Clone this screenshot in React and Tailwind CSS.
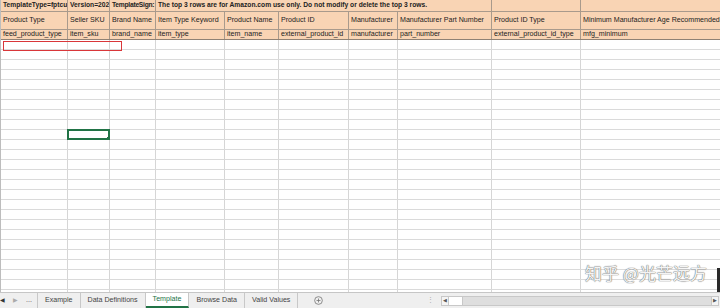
import React from "react";

const COLW = ["w-[67px]", "w-[42px]", "w-[46px]", "w-[69px]", "w-[54px]", "w-[70px]", "w-[49px]", "w-[94px]", "w-[89px]", "w-[140px]"];
const HEAD = ["Product Type", "Seller SKU", "Brand Name", "Item Type Keyword", "Product Name", "Product ID", "Manufacturer", "Manufacturer Part Number", "Product ID Type", "Minimum Manufacturer Age Recommended"];
const KEYS = ["feed_product_type", "item_sku", "brand_name", "item_type", "item_name", "external_product_id", "manufacturer", "part_number", "external_product_id_type", "mfg_minimum"];
const ROWS = 26;
const SELECTED_ROW = 9;

function PeachCell({ w, children, bold, tight }) {
  return (
    <div className={`${w} shrink-0 h-full flex items-center border-r border-[#a99a8c] overflow-hidden whitespace-nowrap pl-[2px] ${bold ? "font-bold" : ""} ${tight ? "tracking-[-0.25px]" : ""}`}>
      {children}
    </div>
  );
}

function Tab({ label, active }) {
  return (
    <div className={`h-full flex items-center px-[7px] border-r border-[#c8c8c8] ${active ? "bg-white text-[#217346] border-b-2 border-b-[#217346]" : "text-[#444]"}`}>
      {label}
    </div>
  );
}

export default function App() {
  return (
    <div className="w-[720px] h-[308px] relative overflow-hidden bg-white flex flex-col font-['Liberation_Sans',Arial,sans-serif] text-[#222]">
      {/* column header selection marker */}
      <div className="absolute top-0 left-[67px] w-[42px] h-[1px] bg-[#6fa487]" />

      <div className="flex-1 relative overflow-hidden border-l border-[#bdbdbd]">
        {/* row 1: cells clip their text, the long one runs over empty cells */}
        <div className="flex h-[12px] bg-[#f9d4b4] border-b border-[#a99a8c] text-[6.7px]">
          <PeachCell w={COLW[0]} bold>TemplateType=fptcu</PeachCell>
          <PeachCell w={COLW[1]} bold>Version=202</PeachCell>
          <PeachCell w={COLW[2]} bold tight>TemplateSign:</PeachCell>
          <div className="w-[336px] shrink-0 h-full flex items-center border-r border-[#a99a8c] whitespace-nowrap pl-[2px] font-bold">
            The top 3 rows are for Amazon.com use only. Do not modify or delete the top 3 rows.
          </div>
          <PeachCell w={COLW[8]} />
          <PeachCell w={COLW[9]} />
        </div>
        {/* row 2 */}
        <div className="flex h-[18px] bg-[#f9d4b4] border-b border-[#a99a8c] text-[7.1px]">
          {HEAD.map((h, i) => (
            <PeachCell key={h} w={COLW[i]}>{h}</PeachCell>
          ))}
        </div>
        {/* row 3 */}
        <div className="flex h-[10px] bg-[#f9d4b4] border-b border-[#8f8174] text-[7.1px]">
          {KEYS.map((k, i) => (
            <PeachCell key={k} w={COLW[i]}>{k}</PeachCell>
          ))}
        </div>
        {/* empty rows */}
        {Array.from({ length: ROWS }, (_, r) => (
          <div key={r} className="flex h-[10px] border-b border-[#dadada]">
            {COLW.map((w, c) => (
              <div key={c} className={`${w} shrink-0 h-full border-r border-[#d6d6d6] relative`}>
                {r === SELECTED_ROW && c === 1 && (
                  <div className="absolute -left-[1px] -top-[1px] w-[43px] h-[11px] border-2 border-[#217346]">
                    <div className="absolute -right-[2px] -bottom-[2px] w-[3px] h-[3px] bg-[#217346]" />
                  </div>
                )}
                {r === SELECTED_ROW && c === 0 && (
                  <div className="absolute -left-[1px] top-0 w-[1px] h-[10px] bg-[#217346]" />
                )}
              </div>
            ))}
          </div>
        ))}

        {/* red annotation box */}
        <div className="absolute left-[2px] top-[41px] w-[119px] h-[10px] border border-[#d9373a]" />

        {/* watermark */}
        <div className="absolute left-[584px] top-[264px] text-[17px] leading-none text-[#f4f4f4] font-['Noto_Sans_CJK_SC',sans-serif] [text-shadow:0_0_1px_#666,0_0_1px_#666]">
          知乎 @光芒远方
        </div>
        <div className="absolute right-0 top-[268px] w-[3px] h-[24px] bg-[#2a2a2a]" />
      </div>

      {/* sheet tabs */}
      <div className="h-[16px] shrink-0 flex items-center bg-[#efefef] border-t border-[#c6c6c6] text-[7.1px] text-[#444]">
        <div className="h-full flex items-center gap-[8px] pl-0 pr-[5px] border-r border-[#c8c8c8]">
          <span className="text-[6px] text-[#333]">◀</span>
          <span className="text-[6px] text-[#aaa]">▶</span>
          <span className="text-[#555]">...</span>
        </div>
        <Tab label="Example" />
        <Tab label="Data Definitions" />
        <Tab label="Template" active />
        <Tab label="Browse Data" />
        <Tab label="Valid Values" />
        <div className="w-[16px]" />
        <svg width="9" height="9" viewBox="0 0 10 10" className="shrink-0">
          <circle cx="5" cy="5" r="4.3" fill="none" stroke="#777" strokeWidth="0.9" />
          <path d="M5 2.8v4.4M2.8 5h4.4" stroke="#777" strokeWidth="0.9" />
        </svg>
        <div className="flex-1" />
        <span className="text-[#aaa] mr-[7px]">⋮</span>
        <div className="w-[278px] h-[10px] flex items-center bg-[#dedede] border border-[#c8c8c8] mr-[1px]">
          <div className="w-[7px] h-full flex items-center justify-center bg-[#f4f4f4] border-r border-[#c8c8c8] text-[5px] text-[#555]">◀</div>
          <div className="w-[14px] h-full bg-white border-r border-[#c8c8c8]" />
          <div className="flex-1" />
          <div className="w-[7px] h-full flex items-center justify-center bg-[#f4f4f4] border-l border-[#c8c8c8] text-[5px] text-[#555]">▶</div>
        </div>
      </div>
    </div>
  );
}
